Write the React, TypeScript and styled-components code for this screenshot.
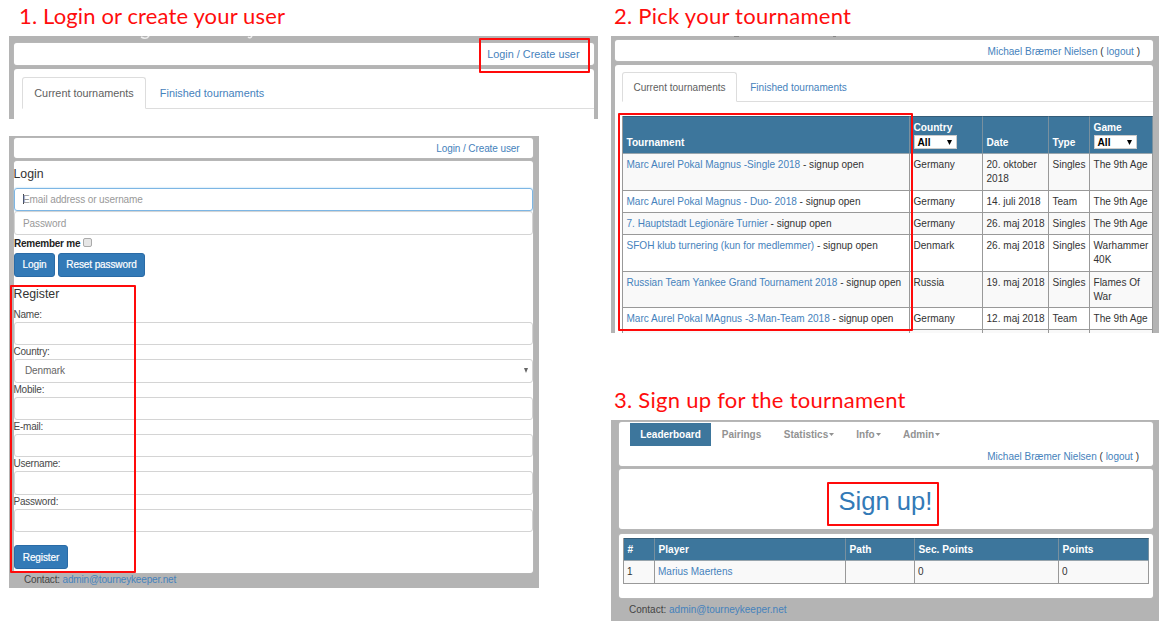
import React from "react";
import styled, { createGlobalStyle, css } from "styled-components";

const Global = createGlobalStyle`
  *, *::before, *::after { box-sizing: border-box; }
  body { margin: 0; background: #fff; font-family: "Liberation Sans", Arial, sans-serif; color: #333; }
  a { color: #4682bc; text-decoration: none; }
`;

const Page = styled.main`
  display: grid;
  grid-template-columns: 589px 548px;
  column-gap: 13px;
  width: 1164px;
  height: 624px;
  padding-left: 9px;
  overflow: hidden;
`;

const Column = styled.div`
  display: flex;
  flex-direction: column;
`;

const StepTitle = styled.h1<{ $spacing: number; $left?: number; $mt?: number }>`
  margin: ${(p) => p.$mt ?? 0}px 0 0;
  height: 36px;
  padding-left: ${(p) => p.$left ?? 3}px;
  font: 400 22px/31px Lato, Carlito, sans-serif;
  letter-spacing: ${(p) => p.$spacing}px;
  color: #ff0d0d;
  white-space: nowrap;
`;

const Shot = styled.section<{ $w: number; $h: number; $pad: string; $font: number; $mt?: number; $spacing?: number }>`
  position: relative;
  display: flex;
  flex-direction: column;
  width: ${(p) => p.$w}px;
  height: ${(p) => p.$h}px;
  margin-top: ${(p) => p.$mt ?? 0}px;
  padding: ${(p) => p.$pad};
  background: #b4b4b4;
  font-size: ${(p) => p.$font}px;
  letter-spacing: ${(p) => p.$spacing ?? 0}px;
  flex: none;
`;

const Card = styled.div<{ $h: number; $mt?: number; $pt?: number; $open?: boolean }>`
  height: ${(p) => p.$h}px;
  margin-top: ${(p) => p.$mt ?? 0}px;
  padding-top: ${(p) => p.$pt ?? 0}px;
  background: #fff;
  border-radius: ${(p) => (p.$open ? "3px 3px 0 0" : "3px")};
  box-shadow: ${(p) => (p.$open ? "none" : "0 0 1px #d8d8d8")};
  flex: none;
`;

const UserBar = styled(Card)<{ $right: number }>`
  display: flex;
  justify-content: flex-end;
  align-items: center;
  padding-right: ${(p) => p.$right}px;
  white-space: pre;
`;

const Marker = styled.div<{ $x: number; $y: number; $w: number; $h: number }>`
  position: absolute;
  left: ${(p) => p.$x}px;
  top: ${(p) => p.$y}px;
  width: ${(p) => p.$w}px;
  height: ${(p) => p.$h}px;
  border: 2px solid #ff0a0a;
  border-radius: 1px;
`;

const TitleEdge = styled.svg`
  position: absolute;
  left: 0;
  top: 0;
`;

const Tabs = styled.div<{ $h: number; $ml: number }>`
  display: flex;
  height: ${(p) => p.$h}px;
  margin-left: ${(p) => p.$ml}px;
  border-bottom: 1px solid #ddd;
`;

const Tab = styled.div<{ $w: number; $h: number; $active?: boolean }>`
  width: ${(p) => p.$w}px;
  height: ${(p) => p.$h}px;
  line-height: 30px;
  text-align: center;
  white-space: nowrap;
  color: #4682bc;
  border: 1px solid transparent;
  ${(p) =>
    p.$active &&
    css`
      color: #606060;
      background: #fff;
      border-color: #ddd #ddd #fff;
      border-radius: 3px 3px 0 0;
    `}
`;

const FormTitle = styled.h2<{ $h: number; $pt?: number }>`
  margin: 0;
  height: ${(p) => p.$h}px;
  padding-top: ${(p) => p.$pt ?? 0}px;
  font-size: 12.3px;
  font-weight: 400;
  letter-spacing: 0;
  line-height: 26px;
  text-indent: -0.5px;
`;

const Field = styled.div<{ $focus?: boolean; $value?: boolean }>`
  display: flex;
  align-items: center;
  justify-content: space-between;
  height: 23.4px;
  padding: 0 4px 0 ${(p) => (p.$value ? 10 : 8)}px;
  border: 1px solid ${(p) => (p.$focus ? "#7db6e4" : "#d4d4d4")};
  border-radius: 3px;
  color: ${(p) => (p.$value ? "#666" : "#999")};
  ${(p) => p.$focus && "box-shadow: 0 0 2px #9accf0;"}
`;

const Caret = styled.span`
  display: inline-block;
  width: 1px;
  height: 10px;
  margin-right: -1px;
  background: #444;
  vertical-align: -1px;
`;

const Label = styled.label`
  display: block;
  height: 14px;
  font-size: 10px;
  letter-spacing: -0.22px;
  line-height: 14px;
  color: #484848;
  text-indent: -0.5px;
`;

const Remember = styled.label`
  display: flex;
  align-items: center;
  gap: 3px;
  height: 18px;
  font-weight: 700;
  letter-spacing: -0.24px;
  color: #222;
`;

const CheckBox = styled.span`
  width: 9px;
  height: 9px;
  margin-top: -3px;
  border: 1px solid #aaa;
  border-radius: 2px;
  background: #e6e6e6;
`;

const Buttons = styled.div<{ $mt?: number }>`
  display: flex;
  gap: 3px;
  height: 24px;
  margin-top: ${(p) => p.$mt ?? 0}px;
`;

const Button = styled.button<{ $w: number }>`
  width: ${(p) => p.$w}px;
  padding: 0;
  font: inherit;
  letter-spacing: inherit;
  color: #fff;
  background: #337ab7;
  border: 1px solid #2a6ba6;
  border-radius: 3px;
  -webkit-text-stroke: 0.2px #fff;
`;

const Contact = styled.footer<{ $h: number; $spacing?: number }>`
  padding-left: 10px;
  font-size: 10px;
  letter-spacing: ${(p) => p.$spacing ?? 0}px;
  line-height: ${(p) => p.$h}px;
  color: #444;
  white-space: nowrap;
`;

const Table = styled.div<{ $cols: string; $ml: number; $mt: number; $w: number }>`
  display: grid;
  grid-template-columns: ${(p) => p.$cols};
  width: ${(p) => p.$w}px;
  margin: ${(p) => p.$mt}px 0 0 ${(p) => p.$ml}px;
  border-left: 1px solid #999;
`;

const HeadCell = styled.div<{ $h: number }>`
  display: flex;
  flex-direction: column;
  justify-content: flex-end;
  height: ${(p) => p.$h}px;
  padding: 0 0 3px 3.5px;
  line-height: 15px;
  font-weight: 700;
  font-size: 10.15px;
  color: #fff;
  background: #3d769c;
  border-top: 1px solid #345c78;
  border-right: 1px solid #78909f;
  border-bottom: 1px solid #98a5ad;
  white-space: nowrap;
`;

const Filter = styled.span`
  display: flex;
  align-items: center;
  justify-content: space-between;
  width: 43px;
  height: 14px;
  margin-bottom: 1px;
  padding: 0 4px 0 3px;
  color: #000;
  background: #fff;
  border: 1px solid #ccc;
`;

const Cell = styled.div<{ $h: number; $odd?: boolean; $pt?: number; $pl?: number }>`
  height: ${(p) => p.$h}px;
  padding: ${(p) => p.$pt ?? 4}px 0 0 ${(p) => p.$pl ?? 3.5}px;
  line-height: 14.4px;
  white-space: pre;
  background: ${(p) => (p.$odd ? "#f9f9f9" : "#fff")};
  border-right: 1px solid #999;
  border-bottom: 1px solid #999;
  overflow: hidden;
`;

const CutCell = styled(Cell)`
  padding: 0;
  border-bottom: 0;
`;

const Nav = styled.nav`
  display: flex;
  align-items: center;
  height: 24px;
  padding-left: 11px;
  font-weight: 700;
  color: #929292;
`;

const NavItem = styled.div<{ $w: number; $active?: boolean }>`
  display: flex;
  align-items: center;
  justify-content: center;
  gap: 1px;
  width: ${(p) => p.$w}px;
  height: 23px;
  ${(p) => p.$active && "color: #fff; background: #3d769c;"}
`;

const NavUser = styled.div`
  display: flex;
  justify-content: flex-end;
  padding-right: 14px;
  line-height: 21px;
  white-space: pre;
`;

const SignUp = styled.a`
  display: block;
  padding-left: 219.5px;
  font-size: 25.6px;
  line-height: 64px;
  color: #337ab7;
  white-space: nowrap;
`;

const Arrow = ({ w = 5, h = 5 }: { w?: number; h?: number }) => (
  <svg width={w} height={h} viewBox="0 0 10 10" preserveAspectRatio="none">
    <path d="M0 0H10L5 10Z" fill="currentColor" />
  </svg>
);

const rows: { h: number; name: string; cells: string[] }[] = [
  { h: 37, name: "Marc Aurel Pokal Magnus -Single 2018", cells: ["Germany", "20. oktober\n2018", "Singles", "The 9th Age"] },
  { h: 22, name: "Marc Aurel Pokal Magnus - Duo- 2018", cells: ["Germany", "14. juli 2018", "Team", "The 9th Age"] },
  { h: 22, name: "7. Hauptstadt Legionäre Turnier", cells: ["Germany", "26. maj 2018", "Singles", "The 9th Age"] },
  { h: 37, name: "SFOH klub turnering (kun for medlemmer)", cells: ["Denmark", "26. maj 2018", "Singles", "Warhammer\n40K"] },
  { h: 36, name: "Russian Team Yankee Grand Tournament 2018", cells: ["Russia", "19. maj 2018", "Singles", "Flames Of\nWar"] },
  { h: 22, name: "Marc Aurel Pokal MAgnus -3-Man-Team 2018", cells: ["Germany", "12. maj 2018", "Team", "The 9th Age"] },
];

const User = () => (
  <span>
    <a>Michael Bræmer Nielsen</a> ( <a>logout</a> )
  </span>
);

export default function App() {
  return (
    <>
      <Global />
      <Page>
        <Column>
          <StepTitle $spacing={0.14} $left={10}>1. Login or create your user</StepTitle>
          <Shot $w={589} $h={83} $pad="7px 4px 0 5px" $font={10.85}>
            <TitleEdge width="300" height="4">
              <path d="M132 1Q137 4 140 0M239 1Q241 3 243 0" fill="none" stroke="#eee" strokeWidth="1.5" />
            </TitleEdge>
            <UserBar $h={22} $right={14.5}><a>Login / Create user</a></UserBar>
            <Card $h={50} $mt={4} $pt={8} $open>
              <Tabs $h={32} $ml={8}>
                <Tab $w={124} $h={32} $active>Current tournaments</Tab>
                <Tab $w={132} $h={32}>Finished tournaments</Tab>
              </Tabs>
            </Card>
            <Marker $x={470} $y={2} $w={111} $h={35} />
          </Shot>
          <Shot $w={530} $h={452} $pad="2px 6px 0 5px" $font={10} $spacing={-0.1} $mt={17}>
            <UserBar $h={20} $pt={1} $right={13.5}><a>Login / Create user</a></UserBar>
            <Card $h={412} $mt={3}>
              <FormTitle $h={27}>Login</FormTitle>
              <Field $focus><span><Caret />Email address or username</span></Field>
              <Field>Password</Field>
              <Remember>Remember me<CheckBox /></Remember>
              <Buttons><Button $w={41}>Login</Button><Button $w={87}>Reset password</Button></Buttons>
              <FormTitle $h={31} $pt={4}>Register</FormTitle>
              <Label>Name:</Label><Field />
              <Label>Country:</Label><Field $value>Denmark<Arrow w={4} h={5} /></Field>
              <Label>Mobile:</Label><Field />
              <Label>E-mail:</Label><Field />
              <Label>Username:</Label><Field />
              <Label>Password:</Label><Field />
              <Buttons $mt={13}><Button $w={54}>Register</Button></Buttons>
            </Card>
            <Contact $spacing={-0.17} $h={14}>Contact: <a>admin@tourneykeeper.net</a></Contact>
            <Marker $x={1} $y={149} $w={126} $h={288} />
          </Shot>
        </Column>

        <Column>
          <StepTitle $spacing={0.26}>2. Pick your tournament</StepTitle>
          <Shot $w={548} $h={297} $pad="4px 6px 0 4px" $font={10.05}>
            <TitleEdge width="300" height="2">
              <path d="M123 0H128M222 0H225" fill="none" stroke="#777" strokeWidth="1.5" />
            </TitleEdge>
            <UserBar $h={21} $pt={1} $right={13}><User /></UserBar>
            <Card $h={268} $mt={4} $pt={7} $open>
              <Tabs $h={30} $ml={7}>
                <Tab $w={115} $h={30} $active>Current tournaments</Tab>
                <Tab $w={123} $h={30}>Finished tournaments</Tab>
              </Tabs>
              <Table $cols="287px 73px 66px 41px 63px" $ml={7} $mt={14} $w={531}>
                <HeadCell $h={38}>Tournament</HeadCell>
                <HeadCell $h={38}>Country<Filter>All<Arrow /></Filter></HeadCell>
                <HeadCell $h={38}>Date</HeadCell>
                <HeadCell $h={38}>Type</HeadCell>
                <HeadCell $h={38}>Game<Filter>All<Arrow /></Filter></HeadCell>
                {rows.map((r, i) => (
                  <React.Fragment key={r.name}>
                    <Cell $h={r.h} $odd={i % 2 === 0}><a>{r.name}</a> - signup open</Cell>
                    {r.cells.map((c, j) => (
                      <Cell key={j} $h={r.h} $odd={i % 2 === 0}>{c}</Cell>
                    ))}
                  </React.Fragment>
                ))}
                {[0, 1, 2, 3, 4].map((i) => <CutCell key={i} $h={3} $odd />)}
              </Table>
            </Card>
            <Marker $x={7} $y={77} $w={295} $h={218} />
          </Shot>
          <StepTitle $spacing={0.26} $mt={51}>3. Sign up for the tournament</StepTitle>
          <Shot $w={548} $h={201} $pad="2px 6px 0 8px" $font={10}>
            <Card $h={44}>
              <Nav>
                <NavItem $w={81} $active>Leaderboard</NavItem>
                <NavItem $w={61}>Pairings</NavItem>
                <NavItem $w={74}>Statistics<Arrow h={3} /></NavItem>
                <NavItem $w={45}>Info<Arrow h={3} /></NavItem>
                <NavItem $w={61}>Admin<Arrow h={3} /></NavItem>
              </Nav>
              <NavUser><User /></NavUser>
            </Card>
            <Card $h={60} $mt={3}><SignUp>Sign up!</SignUp></Card>
            <Card $h={64} $mt={5} $pt={4}>
              <Table $cols="31px 191px 69px 144px 90px" $ml={4} $mt={0} $w={526}>
                {["#", "Player", "Path", "Sec. Points", "Points"].map((c) => (
                  <HeadCell key={c} $h={23}>{c}</HeadCell>
                ))}
                <Cell $h={23} $pl={3} $odd>1</Cell>
                <Cell $h={23} $pl={3} $odd><a>Marius Maertens</a></Cell>
                <Cell $h={23} $pl={3} $odd />
                <Cell $h={23} $pl={3} $odd>0</Cell>
                <Cell $h={23} $pl={3} $odd>0</Cell>
              </Table>
            </Card>
            <Contact $h={24}>Contact: <a>admin@tourneykeeper.net</a></Contact>
            <Marker $x={216} $y={62} $w={112} $h={44} />
          </Shot>
        </Column>
      </Page>
    </>
  );
}
